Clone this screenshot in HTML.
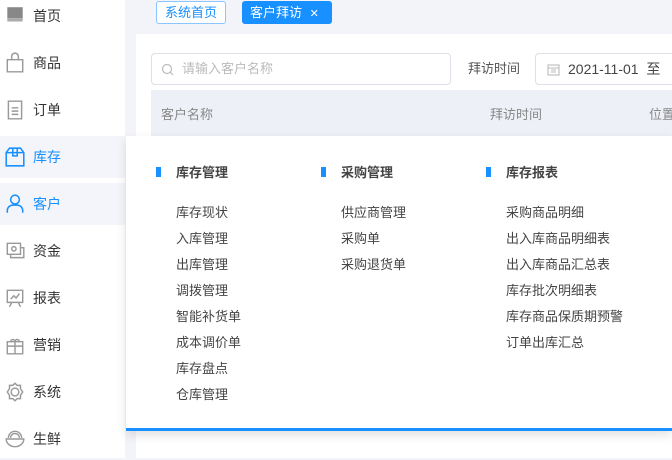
<!DOCTYPE html><html><head><meta charset="utf-8"><style>
*{margin:0;padding:0;box-sizing:border-box}
body{width:672px;height:458px;overflow:hidden;position:relative;background:#f3f4f9;font-family:"Liberation Sans","Noto Sans CJK SC",sans-serif;font-size:14px;color:#333}
.side{position:absolute;left:0;top:0;width:125px;height:458px;background:#fff}
.it{position:absolute;left:0;width:125px;height:42px;display:flex;align-items:center;color:#333;font-size:14px}
.it svg{position:absolute;left:4px;top:50%;margin-top:-11px}
.it span{position:absolute;left:33px}
.act{background:#f3f5fa;color:#1890ff}
.tab{position:absolute;top:1px;height:23px;border-radius:3px;font-size:13px;line-height:21px;padding:0 8px}
.card{position:absolute;left:136px;top:34px;width:536px;height:424px;background:#fff}
.pop{position:absolute;left:126px;top:136px;width:546px;height:295px;background:#fff;border-bottom:3px solid #1890ff;box-shadow:0 4px 10px rgba(0,0,0,.12)}
.bar{position:absolute;top:31px;width:5px;height:10px;background:#1890ff}
.h{position:absolute;top:26px;font-weight:bold;font-size:13px;color:#444;white-space:nowrap}
.l{position:absolute;font-size:13px;color:#444;white-space:nowrap;margin-top:-1px}
</style></head><body>
<div class="side">
<div class="it" style="top:-5px"><svg width="22" height="22" viewBox="0 0 20 20"><path d="M3 2h14v10H3z" fill="#888"/><path d="M3 12h14v3H3z" fill="#aaa"/></svg><span>首页</span></div>
<div class="it" style="top:42px"><svg width="22" height="22" viewBox="0 0 20 20" fill="none" stroke="#999" stroke-width="1.3"><path d="M3 7h14v11H3z M7 7V4a3 3 0 0 1 6 0v3"/></svg><span>商品</span></div>
<div class="it" style="top:89px"><svg width="22" height="22" viewBox="0 0 20 20" fill="none" stroke="#999" stroke-width="1.3"><path d="M4 2h12v16H4z M7 8h6 M7 11h6 M7 14h6"/></svg><span>订单</span></div>
<div class="it act" style="top:136px"><svg width="22" height="22" viewBox="0 0 20 20" fill="none" stroke="#1890ff" stroke-width="1.4"><path d="M2 6l3-4h10l3 4v12H2z M2 6h16 M8 2v7h4V2"/></svg><span>库存</span></div>
<div class="it act" style="top:183px"><svg width="22" height="22" viewBox="0 0 20 20" fill="none" stroke="#1890ff" stroke-width="1.4"><circle cx="10" cy="6" r="4"/><path d="M3 18v-2a5 5 0 0 1 5-5h4a5 5 0 0 1 5 5v2"/></svg><span>客户</span></div>
<div class="it" style="top:230px"><svg width="22" height="22" viewBox="0 0 20 20" fill="none" stroke="#999" stroke-width="1.3"><path d="M3 3h12v10H3z M15 7h3v9H6v-3"/><circle cx="9" cy="8" r="2"/></svg><span>资金</span></div>
<div class="it" style="top:277px"><svg width="22" height="22" viewBox="0 0 20 20" fill="none" stroke="#999" stroke-width="1.3"><path d="M3 3h14v11H3z M6 11l3-3 2 2 3-4 M7 14l-2 4 M13 14l2 4"/></svg><span>报表</span></div>
<div class="it" style="top:324px"><svg width="22" height="22" viewBox="0 0 20 20" fill="none" stroke="#999" stroke-width="1.3"><path d="M3 7h14v11H3z M3 11h14 M10 7v11 M6 7a2 2 0 1 1 4 0 2 2 0 1 1 4 0"/></svg><span>营销</span></div>
<div class="it" style="top:371px"><svg width="22" height="22" viewBox="0 0 20 20" fill="none" stroke="#999" stroke-width="1.3"><circle cx="10" cy="10" r="3.5"/><path d="M10 2l2 2h3v3l2 3-2 3v3h-3l-2 2-2-2H5v-3l-2-3 2-3V4h3z"/></svg><span>系统</span></div>
<div class="it" style="top:418px"><svg width="22" height="22" viewBox="0 0 20 20" fill="none" stroke="#999" stroke-width="1.3"><path d="M2 10h16a8 7 0 0 1-16 0z M4 9a6 6 0 0 1 12 0 M6 9a4 4 0 0 1 8 0"/></svg><span>生鲜</span></div>
</div>
<div class="tab" style="left:156px;border:1px solid #8cc5ff;color:#1890ff;background:#fff">系统首页</div>
<div class="tab" style="left:242px;background:#1890ff;color:#fff;width:90px;line-height:23px">客户拜访 <span style="font-size:11px;margin-left:4px">✕</span></div>
<div class="card">
<div style="position:absolute;left:15px;top:19px;width:300px;height:32px;border:1px solid #dcdfe6;border-radius:4px;color:#bbb;font-size:13px;line-height:30px;padding-left:30px">请输入客户名称
<svg style="position:absolute;left:9px;top:9px" width="13" height="13" viewBox="0 0 13 13" fill="none" stroke="#bbb" stroke-width="1.2"><circle cx="6" cy="6" r="4.5"/><path d="M9.5 9.5l2.5 2.5"/></svg></div>
<div style="position:absolute;left:332px;top:26px;font-size:13px;color:#555;line-height:18px">拜访时间</div>
<div style="position:absolute;left:399px;top:19px;width:150px;height:32px;border:1px solid #dcdfe6;border-radius:4px;font-size:14px;line-height:30px;padding-left:32px;color:#444;white-space:nowrap">2021-11-01 &nbsp;至
<svg style="position:absolute;left:11px;top:9px" width="13" height="13" viewBox="0 0 13 13" fill="none" stroke="#bbb" stroke-width="1.1"><rect x="1" y="2" width="11" height="10"/><path d="M1 5h11 M4 7h5 M4 9h5"/></svg></div>
<div style="position:absolute;left:15px;top:56px;width:521px;height:46px;background:#eef0f8;color:#888;font-size:13px;white-space:nowrap;overflow:hidden">
<span style="position:absolute;left:10px;top:14px">客户名称</span>
<span style="position:absolute;left:339px;top:14px">拜访时间</span>
<span style="position:absolute;left:498px;top:14px">位置</span></div>
</div>
<div class="pop">
<div class="bar" style="left:30px"></div><div class="h" style="left:50px">库存管理</div>
<div class="bar" style="left:195px"></div><div class="h" style="left:215px">采购管理</div>
<div class="bar" style="left:360px"></div><div class="h" style="left:380px">库存报表</div>
<div class="l" style="left:50px;top:67px">库存现状</div>
<div class="l" style="left:50px;top:93px">入库管理</div>
<div class="l" style="left:50px;top:119px">出库管理</div>
<div class="l" style="left:50px;top:145px">调拨管理</div>
<div class="l" style="left:50px;top:171px">智能补货单</div>
<div class="l" style="left:50px;top:197px">成本调价单</div>
<div class="l" style="left:50px;top:223px">库存盘点</div>
<div class="l" style="left:50px;top:249px">仓库管理</div>
<div class="l" style="left:215px;top:67px">供应商管理</div>
<div class="l" style="left:215px;top:93px">采购单</div>
<div class="l" style="left:215px;top:119px">采购退货单</div>
<div class="l" style="left:380px;top:67px">采购商品明细</div>
<div class="l" style="left:380px;top:93px">出入库商品明细表</div>
<div class="l" style="left:380px;top:119px">出入库商品汇总表</div>
<div class="l" style="left:380px;top:145px">库存批次明细表</div>
<div class="l" style="left:380px;top:171px">库存商品保质期预警</div>
<div class="l" style="left:380px;top:197px">订单出库汇总</div>
</div>
</body></html>
